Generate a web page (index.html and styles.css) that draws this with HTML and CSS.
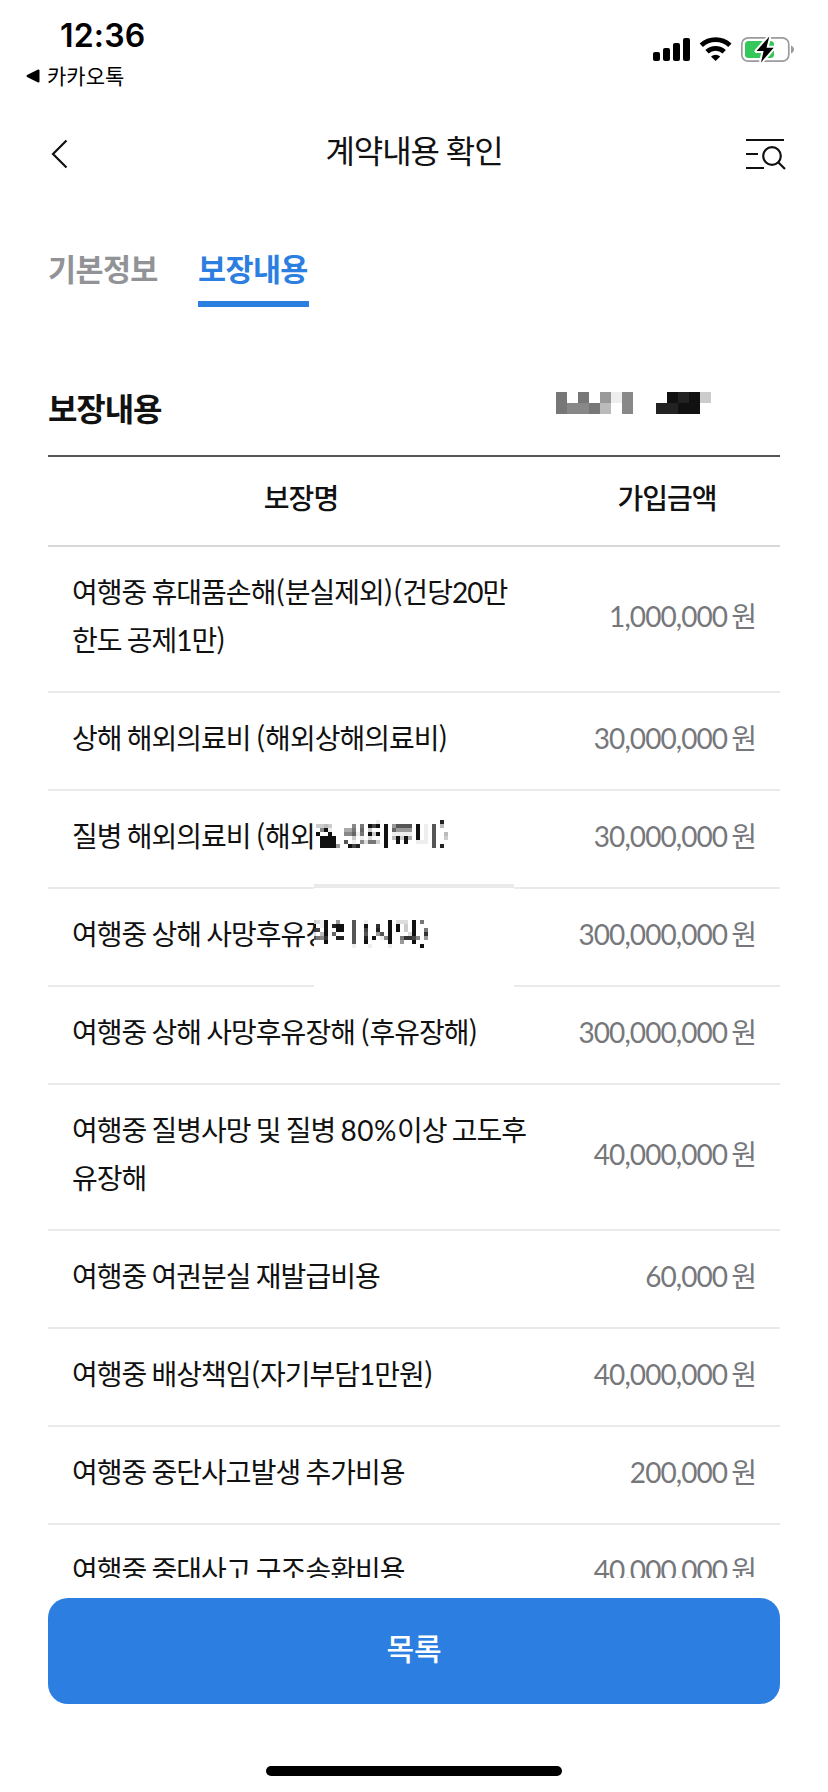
FILE: index.html
```
<!DOCTYPE html>
<html lang="ko">
  <head>
    <meta charset="utf-8">
    <title>계약내용 확인</title>
    <link rel="stylesheet" href="styles.css">
  </head>
  <body>
    <div id="screen">
        <div class="status">
            <div class="status-left">
                <div class="time">12:36</div>
                <div class="back-app">
                    <svg width="14" height="14" viewBox="0 0 14 14"><path d="M1.5 7L12.5 1.5V12.5Z" fill="#000" stroke="#000" stroke-width="2" stroke-linejoin="round"/></svg>
                    <span>카카오톡</span>
                </div>
            </div>
            <svg class="status-icons" width="144" height="30" viewBox="0 0 144 30">
                <!-- signal -->
                <rect x="3" y="16" width="7" height="9" rx="2"/>
                <rect x="13" y="12" width="7" height="13" rx="2"/>
                <rect x="23" y="7" width="7" height="18" rx="2"/>
                <rect x="33" y="2" width="7" height="23" rx="2"/>
                <!-- wifi -->
                <g fill="none" stroke="#000" stroke-width="4.8">
                    <path d="M51.3 9.2A21 21 0 0 1 79.9 9.2"/>
                    <path d="M57 15.8A12.6 12.6 0 0 1 74.2 15.8"/>
                </g>
                <path d="M65.6 25L61 20.6A6.6 6.6 0 0 1 70.2 20.6Z"/>
                <!-- battery -->
                <rect x="91.8" y="1.8" width="47" height="23.4" rx="6.5" fill="none" stroke="#9b9b9b" stroke-width="1.7"/>
                <path d="M141 9.5C145 11 145 16 141 17.5Z" fill="#9b9b9b"/>
                <rect x="95" y="5" width="29" height="17" rx="3.5" fill="#34c759"/>
                <path d="M119.3 0.5L106.5 15H113.6L111 26.5L123.7 11.8H116.5Z" stroke="#fff" stroke-width="4" stroke-linejoin="round"/>
                <path d="M119.3 0.5L106.5 15H113.6L111 26.5L123.7 11.8H116.5Z"/>
            </svg>
        </div>

        <div class="header">
            <svg width="22" height="30" viewBox="0 0 22 30"><path d="M17.5 1.5L4 15L17.5 28.5" fill="none" stroke="#111" stroke-width="2.2"/></svg>
            <h1>계약내용 확인</h1>
            <svg width="42" height="34" viewBox="0 0 42 34" fill="none" stroke="#111" stroke-width="2.2">
                <path d="M1 3H39M1 17H13M1 31H19"/>
                <circle cx="27" cy="19" r="8.8"/>
                <path d="M33 25L40 32"/>
            </svg>
        </div>

        <div class="tabs">
            <span class="tab">기본정보</span>
            <span class="tab on">보장내용</span>
        </div>

        <div class="content">
            <div class="section">
                <h2>보장내용</h2>
                <div class="total">
                    <svg class="mosaic" data-size="11" data-rows="7.7.9e8/7887b.8"></svg>
                    <svg class="mosaic" data-size="11" data-rows=".121c/2211."></svg>
                </div>
            </div>
            <table>
                <tr><th class="name">보장명</th><th>가입금액</th></tr>
                <tr><td>여행중 휴대품손해<i>(</i>분실제외<i>)</i><i>(</i>건당20만<br>한도 공제1만<i>)</i></td><td class="won">1,000,000<span>원</span></td></tr>
                <tr><td>상해 해외의료비 <i>(</i>해외상해의료비<i>)</i></td><td class="won">30,000,000<span>원</span></td></tr>
                <tr><td>질병 해외의료비 <i>(</i>해외</td><td class="won">30,000,000<span>원</span></td></tr>
                <tr><td>여행중 상해 사망후유장</td><td class="won">300,000,000<span>원</span></td></tr>
                <tr><td>여행중 상해 사망후유장해 <i>(</i>후유장해<i>)</i></td><td class="won">300,000,000<span>원</span></td></tr>
                <tr><td>여행중 질병사망 및 질병 <span class="pct">80%</span>이상 고도후<br>유장해</td><td class="won">40,000,000<span>원</span></td></tr>
                <tr><td>여행중 여권분실 재발급비용</td><td class="won">60,000<span>원</span></td></tr>
                <tr><td>여행중 배상책임<i>(</i>자기부담1만원<i>)</i></td><td class="won">40,000,000<span>원</span></td></tr>
                <tr><td>여행중 중단사고발생 추가비용</td><td class="won">200,000<span>원</span></td></tr>
                <tr><td>여행중 중대사고 구조송환비용</td><td class="won">40,000,000<span>원</span></td></tr>
            </table>
            <!-- hidden part of the two rows -->
            <div class="cover">
                <svg class="mosaic m1" data-size="4" data-rows="...............e...............2./ccbc.....8.7.141.1.95555.1.e.5.b./.81e...aa7.6.c...1.69999.1.e.5.../1..1...886e7.1c1.1.eeeee.1.e.5..b/.1111....c.e.d...1.b1c1a.1.e.5..c/.1111..5.e.8d77c.1..1.1..eee.5.../.11119..142......1...........5.2."></svg>
                <div class="line"></div>
                <svg class="mosaic m2" data-size="4" data-rows="cde1..9...5..e.....1.ddd.1.7./1.e1.211..5..1..3..1.1.c.1.../34.1..11..5..4..2..1.1.c.1..7/d.b1.6....5..5..95.1....d1..3/5783..22..5..2.1.e81..73348.9/...1......5..1.....1..9..1.../..........e...e....e.......1."></svg>
            </div>
        </div>

        <div class="bottom">
            <button class="btn">목록</button>
            <div class="home"></div>
        </div>
    </div>
    <script src="script.js"></script>
  </body>
</html>
```
FILE: styles.css
```
* {
    box-sizing: border-box;
    font-family: Lato, "Noto Sans CJK KR", sans-serif;
}

body {
    margin: 0;
    background-color: white;
    color: #111;
}

#screen {
    display: flex;
    flex-direction: column;
    width: 828px;
    height: 1792px;
    overflow: hidden;
}

svg {
    display: block;
    flex: none;
}

.status {
    display: flex;
    justify-content: space-between;
    height: 100px;
    padding: 16px 34px 0 26px;
}

.time {
    padding-left: 34px;
    color: #000;
    font-family: Inter, sans-serif;
    font-size: 32px;
    font-weight: 600;
    line-height: 40px;
    letter-spacing: 0.2px;
}

.back-app {
    display: flex;
    align-items: center;
    gap: 7px;
    height: 40px;
    color: #000;
}

.back-app span {
    padding-bottom: 2px;
    font-family: "Noto Sans CJK KR", sans-serif;
    font-size: 21px;
    line-height: 38px;
}

.status-icons {
    margin-top: 20px;
}

.header {
    display: flex;
    align-items: center;
    justify-content: space-between;
    height: 108px;
    padding: 0 41px 0 49px;
}

.header h1 {
    margin: 0;
    padding-bottom: 10px;
    padding-left: 12px;
    font-size: 32px;
    font-weight: 400;
    letter-spacing: -0.035em;
}

.tabs {
    display: flex;
    gap: 39px;
    height: 99px;
    padding: 36px 48px 0;
}

.tab {
    width: 111px;
    height: 63px;
    color: #929397;
    font-size: 30.5px;
    font-weight: 700;
    line-height: 51px;
    letter-spacing: -0.02em;
    white-space: nowrap;
}

.tab.on {
    color: #2c7fe0;
    border-bottom: 6px solid #2c7fe0;
}

.content {
    position: relative;
    height: 1271px;
    padding: 0 48px;
    overflow: hidden;
}

.section {
    display: flex;
    justify-content: space-between;
    height: 148px;
    padding: 76px 69px 0 0;
}

.section h2 {
    margin: 0;
    font-size: 32px;
    font-weight: 700;
    line-height: 51px;
    letter-spacing: -0.035em;
}

.total {
    display: flex;
    gap: 23px;
    padding-top: 9px;
}

table {
    width: 732px;
    table-layout: fixed;
    border-collapse: separate;
    border-spacing: 0;
    border-top: 2px solid #555;
    font-size: 28px;
    line-height: 48px;
    letter-spacing: -0.035em;
    word-spacing: -1px;
}

th {
    height: 90px;
    padding: 0 0 6px;
    border-bottom: 2px solid #d8d8d8;
    font-weight: 500;
}

th.name {
    width: 506px;
}

td {
    padding: 21px 24px 27px;
    border-bottom: 2px solid #eaeaea;
    white-space: nowrap;
}

/* brackets are a bit wider than the text font's own */
td i {
    font-family: "Noto Sans CJK KR", sans-serif;
    font-style: normal;
    line-height: 1;
    letter-spacing: -0.2px;
}

.pct {
    letter-spacing: 0.5px;
}

td.won {
    padding-left: 0;
    color: #76777b;
    letter-spacing: -0.033em;
    text-align: right;
}

.won span {
    margin-left: 4px;
}

.cover {
    position: absolute;
    left: 314px;
    top: 509px;
    width: 200px;
    height: 176px;
    background-color: white;
    overflow: hidden;
}

.cover .m1 {
    margin: 4px 0 0 2px;
}

.cover .line {
    height: 4px;
    margin: 36px 0 32px;
    background-color: #eaeaea;
}

.cover .m2 {
    margin-left: -2px;
}

.bottom {
    display: flex;
    flex-direction: column;
    align-items: center;
    padding: 20px 48px 0;
}

.btn {
    width: 732px;
    height: 106px;
    padding: 0 0 8px;
    border: none;
    border-radius: 20px;
    background-color: #2c7fe0;
    color: white;
    font-size: 30px;
    font-weight: 500;
}

.home {
    width: 296px;
    height: 10px;
    margin-top: 62px;
    border-radius: 5px;
    background-color: #000;
}
```
FILE: script.js
```
// every character is one cell: a hex digit is its grey, a dot is empty
document.querySelectorAll(".mosaic").forEach(function(svg){
    let size = parseInt(svg.dataset.size)
    let rows = svg.dataset.rows.split("/")
    let ans = ""
    for (let i=0; i<rows.length; i++){
        for (let j=0; j<rows[i].length; j++){
            let c = rows[i][j]
            if (c == "."){continue}
            ans += '<rect x="'+j*size+'" y="'+i*size+'" width="'+size+'" height="'+size+'" fill="#'+c+c+c+'"/>'
        }
    }
    svg.setAttribute("width", rows[0].length*size)
    svg.setAttribute("height", rows.length*size)
    svg.setAttribute("shape-rendering", "crispEdges")
    svg.innerHTML = ans
})
```
